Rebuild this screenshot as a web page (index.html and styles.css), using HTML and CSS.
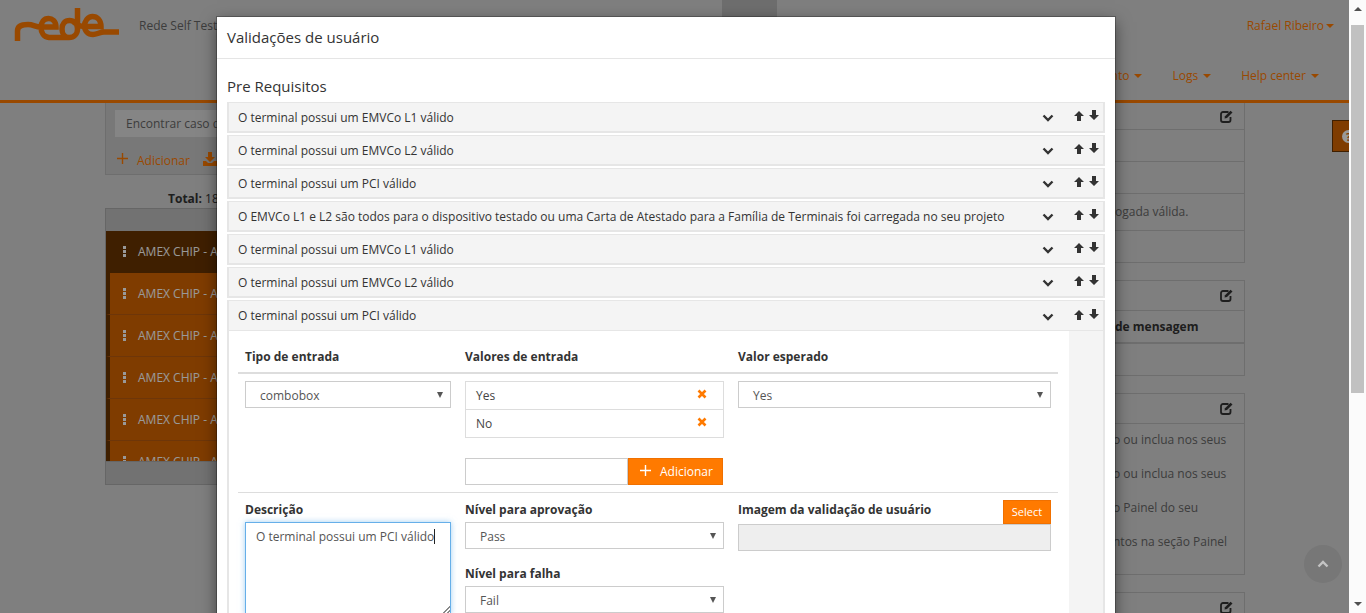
FILE: index.html
```html
<!DOCTYPE html>
<html>
	<head>
		<meta charset='utf8'>
		<title>Rede Self Test</title>
		<link rel="stylesheet" href="styles.css">
	</head>
	<body>
		<svg class="icon_defs" width="0" height="0">
			<symbol id="i_chevron" viewBox="0 0 12 8"><path d="M1.5 1.5L6 6l4.5-4.5" fill="none" stroke="currentColor" stroke-width="2.4"/></symbol>
			<symbol id="i_up" viewBox="0 0 10 10"><path d="M5 0L10 5H7V10H3V5H0Z" fill="currentColor"/></symbol>
			<symbol id="i_down" viewBox="0 0 10 10"><path d="M3 0H7V5H10L5 10L0 5H3Z" fill="currentColor"/></symbol>
			<symbol id="i_edit" viewBox="0 0 13 13"><path d="M8.5 2H3A2 2 0 0 0 1 4V10A2 2 0 0 0 3 12H8.500A2 2 0 0 0 10.500 10V7" fill="none" stroke="currentColor" stroke-width="1.800"/><path d="M4.500 8.500L5 6.200L10.500 0.700L12.500 2.500L7 8Z" fill="currentColor"/></symbol>
			<symbol id="i_close" viewBox="0 0 10 10"><path d="M1.5 1.5L8.5 8.500M8.500 1.500L1.500 8.500" fill="none" stroke="currentColor" stroke-width="2.600"/></symbol>
			<symbol id="i_plus" viewBox="0 0 11 11"><path d="M5.500 0V11M0 5.500H11" fill="none" stroke="currentColor" stroke-width="1.400"/></symbol>
		</svg>
		<div class="window">
			<div class="viewport">
				<div class="page">
					<header class="site_header">
						<div class="top_bar">
							<svg class="logo" width="126" height="50" viewBox="0 0 126 50"><path d="M4.500 41V31C4.500 26 9 24.500 15 24.500C20 24.500 23 27 27 27H43C43 21 39 18.500 35.500 18.500C31 18.500 28 22 28 27.500C28 33 31 37 36 37.500H56C61 37.500 64.500 34 64.500 29V8M64.500 29C64.500 24 61 20.500 56.500 20.500C52 20.500 49 24 49 29C49 34 52 37.500 56 37.500M60 21.500C64 25 67 26.500 71 26.500H88C88 20 84 16.500 79.500 16.500C75 16.500 71.500 21 71.500 26C71.500 31 75 34.500 80 34.500C84 34.500 87 32 91 32H106" fill="none" stroke="#ff7a00" stroke-width="5.500"/></svg>
							<div class="site_title">Rede Self Test</div>
							<div class="top_tab"></div>
							<div class="user_menu">Rafael Ribeiro<span class="caret"></span></div>
						</div>
						<nav class="main_nav">
							<a>Gerenciamento<span class="caret"></span></a>
							<a>Logs<span class="caret"></span></a>
							<a>Help center<span class="caret"></span></a>
						</nav>
					</header>
					<main class="content">
						<section class="side_col">
							<div class="filter_box">
								<div class="filter_input">Encontrar caso de teste</div>
								<div class="filter_actions">
									<svg class="add_icon" width="11" height="11"><use href="#i_plus"/></svg>
									<span>Adicionar</span>
									<svg class="save_icon" width="14" height="14" viewBox="0 0 14 14"><path d="M5 0H9V5H12L7 10L2 5H5ZM0 9H3L5 11H9L11 9H14V14H0Z" fill="currentColor"/></svg>
								</div>
							</div>
							<div class="total_line"><b>Total:</b> 18</div>
							<div class="case_list">
								<div class="list_bar"></div>
								<div class="case_rows">
									<div class="case_row selected"><span class="dots"><i></i><i></i><i></i></span>AMEX CHIP - AUTH</div>
									<div class="case_row"><span class="dots"><i></i><i></i><i></i></span>AMEX CHIP - AUTH</div>
									<div class="case_row"><span class="dots"><i></i><i></i><i></i></span>AMEX CHIP - AUTH</div>
									<div class="case_row"><span class="dots"><i></i><i></i><i></i></span>AMEX CHIP - AUTH</div>
									<div class="case_row"><span class="dots"><i></i><i></i><i></i></span>AMEX CHIP - AUTH</div>
									<div class="case_row"><span class="dots"><i></i><i></i><i></i></span>AMEX CHIP - AUTH</div>
								</div>
								<div class="list_bar"></div>
							</div>
						</section>
						<section class="info_col">
							<div class="info_panel first">
								<div class="info_head"><svg width="13" height="13"><use href="#i_edit"/></svg></div>
								<div class="info_row h32"></div>
								<div class="info_row h32"></div>
								<div class="info_row h37">ogada válida.</div>
								<div class="info_row h31 last"></div>
							</div>
							<div class="info_panel">
								<div class="info_head"><svg width="13" height="13"><use href="#i_edit"/></svg></div>
								<div class="info_row h32 thick"><b>de mensagem</b></div>
								<div class="info_row h31 last"></div>
							</div>
							<div class="info_panel">
								<div class="info_head"><svg width="13" height="13"><use href="#i_edit"/></svg></div>
								<div class="info_text">o ou inclua nos seus</div>
								<div class="info_text">o ou inclua nos seus</div>
								<div class="info_text">o Painel do seu</div>
								<div class="info_text">ntos na seção Painel</div>
							</div>
							<div class="info_panel">
								<div class="info_head"><svg width="13" height="13"><use href="#i_edit"/></svg></div>
							</div>
						</section>
					</main>
					<div class="help_tab"><span>?</span></div>
				</div>
				<div class="overlay">
					<div class="scroll_top"><svg width="12" height="8"><use href="#i_chevron"/></svg></div>
					<div class="modal">
						<div class="modal_head">Validações de usuário</div>
						<div class="modal_body">
							<h4 class="group_title">Pre Requisitos</h4>
							<div class="req_panel">
								<div class="req_head"><span>O terminal possui um EMVCo L1 válido</span><svg class="chev" width="12" height="8"><use href="#i_chevron"/></svg><span class="moves"><svg width="10" height="10"><use href="#i_up"/></svg><svg width="10" height="10"><use href="#i_down"/></svg></span></div>
							</div>
							<div class="req_panel">
								<div class="req_head"><span>O terminal possui um EMVCo L2 válido</span><svg class="chev" width="12" height="8"><use href="#i_chevron"/></svg><span class="moves"><svg width="10" height="10"><use href="#i_up"/></svg><svg width="10" height="10"><use href="#i_down"/></svg></span></div>
							</div>
							<div class="req_panel">
								<div class="req_head"><span>O terminal possui um PCI válido</span><svg class="chev" width="12" height="8"><use href="#i_chevron"/></svg><span class="moves"><svg width="10" height="10"><use href="#i_up"/></svg><svg width="10" height="10"><use href="#i_down"/></svg></span></div>
							</div>
							<div class="req_panel">
								<div class="req_head"><span>O EMVCo L1 e L2 são todos para o dispositivo testado ou uma Carta de Atestado para a Família de Terminais foi carregada no seu projeto</span><svg class="chev" width="12" height="8"><use href="#i_chevron"/></svg><span class="moves"><svg width="10" height="10"><use href="#i_up"/></svg><svg width="10" height="10"><use href="#i_down"/></svg></span></div>
							</div>
							<div class="req_panel">
								<div class="req_head"><span>O terminal possui um EMVCo L1 válido</span><svg class="chev" width="12" height="8"><use href="#i_chevron"/></svg><span class="moves"><svg width="10" height="10"><use href="#i_up"/></svg><svg width="10" height="10"><use href="#i_down"/></svg></span></div>
							</div>
							<div class="req_panel">
								<div class="req_head"><span>O terminal possui um EMVCo L2 válido</span><svg class="chev" width="12" height="8"><use href="#i_chevron"/></svg><span class="moves"><svg width="10" height="10"><use href="#i_up"/></svg><svg width="10" height="10"><use href="#i_down"/></svg></span></div>
							</div>
							<div class="req_panel open">
								<div class="req_head"><span>O terminal possui um PCI válido</span><svg class="chev" width="12" height="8"><use href="#i_chevron"/></svg><span class="moves"><svg width="10" height="10"><use href="#i_up"/></svg><svg width="10" height="10"><use href="#i_down"/></svg></span></div>
								<div class="req_content">
									<div class="req_form">
										<div class="form_row titles">
											<div class="form_label">Tipo de entrada</div>
											<div class="form_label">Valores de entrada</div>
											<div class="form_label">Valor esperado</div>
										</div>
										<div class="form_row values">
											<div class="form_cell"><div class="select_box">combobox</div></div>
											<div class="form_cell">
												<ul class="value_list">
													<li>Yes<svg width="10" height="10"><use href="#i_close"/></svg></li>
													<li>No<svg width="10" height="10"><use href="#i_close"/></svg></li>
												</ul>
												<div class="add_row">
													<input class="add_input" type="text">
													<button class="orange_btn add_btn"><svg width="11" height="11"><use href="#i_plus"/></svg>Adicionar</button>
												</div>
											</div>
											<div class="form_cell"><div class="select_box">Yes</div></div>
										</div>
										<div class="form_row details">
											<div class="form_cell">
												<div class="form_label">Descrição</div>
												<div class="desc_box">O terminal possui um PCI válido<span class="text_caret"></span></div>
											</div>
											<div class="form_cell">
												<div class="form_label">Nível para aprovação</div>
												<div class="select_box">Pass</div>
												<div class="form_label second">Nível para falha</div>
												<div class="select_box">Fail</div>
											</div>
											<div class="form_cell">
												<div class="image_head">
													<div class="form_label">Imagem da validação de usuário</div>
													<button class="orange_btn select_btn">Select</button>
												</div>
												<div class="image_input"></div>
											</div>
										</div>
									</div>
								</div>
							</div>
						</div>
					</div>
				</div>
			</div>
			<div class="scrollbar">
				<span class="sb_up"></span>
				<div class="sb_track"><div class="sb_thumb"></div></div>
				<span class="sb_down"></span>
			</div>
		</div>
	</body>
</html>
```

FILE: styles.css
```css
html,body{
	margin:0;
	height:613px;
	overflow:hidden;
}
body{
	font-family:"Open Sans","Liberation Sans",sans-serif;
	font-size:12px;
	color:#333;
}
svg{
	display:block;
	flex:none;
}
.icon_defs{
	position:absolute;
}
.window{
	display:flex;
	height:613px;
}
.viewport{
	flex:1;
	position:relative;
	overflow:hidden;
}
.page{
	height:613px;
	background:#d4d4d4;
	overflow:hidden;
	color:#666;
}

/* cabecalho */
.site_header{
	height:100px;
	border-bottom:3px solid #ff7a00;
}
.top_bar{
	display:flex;
	height:50px;
	padding-left:13px;
	padding-right:15px;
}
.logo{
	width:126px;
	height:50px;
}
.site_title{
	width:583px;
	line-height:51px;
	white-space:nowrap;
}
.top_tab{
	width:55px;
	background:#b8b8b8;
}
.user_menu{
	margin-left:auto;
	line-height:51px;
	color:#ff7a00;
}
.caret{
	display:inline-block;
	margin-left:2px;
	vertical-align:2px;
	border-left:4px solid transparent;
	border-right:4px solid transparent;
	border-top:4px solid #ff7a00;
}
.main_nav{
	display:flex;
	justify-content:flex-end;
	gap:30px;
	height:50px;
	padding-right:30px;
	line-height:52px;
	color:#ff7a00;
}
.main_nav .caret{
	margin-left:5px;
}

/* colunas */
.content{
	display:flex;
	justify-content:space-between;
	padding:0 104px 0 105px;
}
.side_col{
	width:600px;
}
.filter_box{
	height:72px;
	box-sizing:border-box;
	padding:7px 9px 0;
	background:#c9c9c9;
	border:1px solid #b8b8b8;
	border-top:0;
}
.filter_input{
	height:27px;
	padding-left:11px;
	line-height:27px;
	background:#dedede;
}
.filter_actions{
	display:flex;
	align-items:center;
	height:46px;
	padding-left:2px;
	color:#ff7a00;
}
.filter_actions span{
	margin-left:9px;
}
.add_icon{
	margin-top:-3px;
}
.save_icon{
	margin-left:13px;
	margin-top:-2px;
}
.total_line{
	height:33px;
	padding-left:63px;
	line-height:47px;
	box-sizing:border-box;
	color:#333;
}
.case_list{
	border:1px solid #aaa;
	border-top:0;
	background:#bebebe;
}
.list_bar{
	height:23px;
	background:#bebebe;
	border-top:1px solid #aaa;
	box-sizing:border-box;
}
.case_rows{
	height:230px;
	overflow:hidden;
}
.case_row{
	display:flex;
	align-items:center;
	height:42px;
	box-sizing:border-box;
	padding-left:13px;
	background:#d46400;
	border-left:4px solid #693400;
	border-bottom:1px solid #b85a10;
	color:#fff;
}
.case_row.selected{
	background:#693400;
	border-bottom-color:#693400;
}
.dots{
	display:flex;
	flex-direction:column;
	gap:1px;
	margin-right:12px;
}
.dots i{
	width:3px;
	height:3px;
	background:#fff;
}

/* paineis da direita */
.info_col{
	width:155px;
}
.info_panel{
	margin-bottom:17px;
	border:1px solid #b8b8b8;
}
.info_panel.first{
	border-top:0;
}
.info_head{
	display:flex;
	justify-content:flex-end;
	align-items:center;
	height:29px;
	padding-right:11px;
	border-bottom:1px solid #b8b8b8;
	color:#333;
}
.info_panel.first .info_head{
	height:26px;
}
.info_row{
	box-sizing:border-box;
	padding-left:24px;
	border-bottom:1px solid #b8b8b8;
	white-space:nowrap;
}
.h32{
	height:32px;
	line-height:32px;
}
.h37{
	height:37px;
	line-height:36px;
}
.h31{
	height:31px;
}
.info_row.last{
	border-bottom:0;
}
.info_row.thick{
	height:33px;
	border-bottom-width:2px;
	color:#333;
}
.info_text{
	height:34px;
	padding-left:22px;
	line-height:32px;
	white-space:nowrap;
}
.info_text:last-child{
	height:48px;
}
.help_tab{
	position:absolute;
	top:120px;
	right:0;
	display:flex;
	align-items:center;
	width:16px;
	height:30px;
	background:#d46400;
	border:1px solid #693400;
	border-right:0;
	overflow:hidden;
}
.help_tab span{
	flex:none;
	width:13px;
	height:13px;
	margin-left:9px;
	border-radius:50%;
	background:#fff;
	color:#d46400;
	font-size:11px;
	font-weight:700;
	line-height:13px;
	text-align:center;
}

/* modal */
.overlay{
	position:absolute;
	top:0;
	left:0;
	right:0;
	bottom:0;
	background:rgba(0,0,0,.4);
}
.scroll_top{
	position:absolute;
	top:545px;
	left:1304px;
	display:flex;
	align-items:center;
	justify-content:center;
	width:38px;
	height:38px;
	border-radius:50%;
	background:#777;
	color:#c4c4c4;
}
.scroll_top svg{
	transform:rotate(180deg);
}
.modal{
	position:relative;
	width:898px;
	height:700px;
	margin:17px 0 0 217px;
	background:#fff;
	box-shadow:0 0 0 1px rgba(0,0,0,.25),0 5px 15px rgba(0,0,0,.5);
}
.modal_head{
	height:41px;
	padding-left:10px;
	border-bottom:1px solid #e5e5e5;
	font-size:15px;
	line-height:41px;
}
.modal_body{
	padding:17px 10px 0;
}
.group_title{
	margin:0 0 6px;
	font-size:15px;
	font-weight:400;
	line-height:20px;
}
.req_panel{
	margin-bottom:2px;
	border:2px solid #e6e6e6;
	border-width:1px 2px 2px;
	background:#f4f4f4;
}
.req_head{
	display:flex;
	align-items:center;
	height:28px;
	padding-left:9px;
	line-height:27px;
}
.chev{
	margin-left:auto;
	margin-top:2px;
}
.moves{
	display:flex;
	gap:5px;
	margin-left:20px;
	margin-right:4px;
	margin-top:-2px;
}
.moves svg+svg{
	margin-top:-1px;
}
.req_panel.open{
	border-bottom:0;
}
.req_panel.open .req_head{
	height:29px;
	border-bottom:1px solid #e6e6e6;
}
.req_content{
	width:840px;
	background:#fff;
}
.req_form{
	padding:0 11px 0 9px;
}
.form_row{
	display:grid;
	grid-template-columns:220px 273px 327px;
}
.form_row.titles{
	padding-top:18px;
	padding-bottom:7px;
	border-bottom:2px solid #ddd;
}
.form_row.titles .form_label{
	margin:0;
	padding-left:7px;
}
.form_row.values{
	border-bottom:1px solid #ddd;
}
.form_cell{
	padding:7px;
}
.form_label{
	margin:2px 0 4px;
	font-weight:700;
	line-height:16px;
}
.form_label.second{
	margin:17px 0 4px;
}
.select_box{
	position:relative;
	height:27px;
	box-sizing:border-box;
	padding-left:14px;
	border:1px solid #ccc;
	line-height:27px;
	color:#555;
}
.select_box::after{
	content:"";
	position:absolute;
	top:10px;
	right:7px;
	border-left:3.5px solid transparent;
	border-right:3.5px solid transparent;
	border-top:6px solid #555;
}
.value_list{
	list-style:none;
	margin:0;
	padding:0;
	border:1px solid #ddd;
	color:#444;
}
.value_list li{
	display:flex;
	align-items:center;
	justify-content:space-between;
	height:27px;
	padding:0 16px 0 10px;
	line-height:28px;
}
.value_list li+li{
	border-top:1px solid #ddd;
}
.value_list li svg{
	color:#ff7a00;
	margin-top:-3px;
}
.add_row{
	display:flex;
	margin-top:20px;
}
.add_input{
	width:163px;
	height:27px;
	box-sizing:border-box;
	margin:0;
	border:1px solid #ccc;
	border-radius:0;
	outline:0;
}
.orange_btn{
	border:1px solid #f07000;
	border-radius:0;
	background:#ff7a00;
	color:#fff;
	font:inherit;
	padding:0;
}
.add_btn{
	display:flex;
	align-items:center;
	width:95px;
	height:27px;
	padding-left:11px;
}
.add_btn svg{
	margin-right:9px;
	margin-top:-2px;
}
.desc_box{
	position:relative;
	height:93px;
	box-sizing:border-box;
	padding:6px 10px;
	border:1px solid #66afe9;
	box-shadow:0 0 6px rgba(102,175,233,.6);
	line-height:16px;
	color:#555;
	white-space:nowrap;
}
.text_caret{
	display:inline-block;
	width:1px;
	height:15px;
	vertical-align:-3px;
	background:#222;
}
.desc_box::after{
	content:"";
	position:absolute;
	right:0;
	bottom:0;
	width:8px;
	height:8px;
	background:linear-gradient(135deg,transparent 50%,#888 50%,#888 58%,transparent 58%,transparent 74%,#888 74%,#888 82%,transparent 82%);
}
.image_head{
	display:flex;
	justify-content:space-between;
	align-items:flex-start;
}
.image_head .form_label{
	margin:2px 0 0;
}
.select_btn{
	width:48px;
	height:24px;
	padding-bottom:2px;
	font-size:11px;
}
.image_input{
	height:27px;
	box-sizing:border-box;
	background:#eee;
	border:1px solid #ccc;
}

/* barra de rolagem */
.scrollbar{
	display:flex;
	flex-direction:column;
	align-items:center;
	width:17px;
	background:#fbfbfb;
}
.sb_up,.sb_down{
	flex:none;
	width:0;
	margin:7px 0 0;
	border-left:4px solid transparent;
	border-right:4px solid transparent;
}
.sb_up{
	border-bottom:4px solid #505050;
}
.sb_down{
	margin:0 0 7px;
	border-top:4px solid #505050;
}
.sb_track{
	flex:1;
	width:100%;
	padding-top:14px;
	box-sizing:border-box;
}
.sb_thumb{
	width:13px;
	height:368px;
	margin:0 auto;
	background:#c1c1c1;
}
```
